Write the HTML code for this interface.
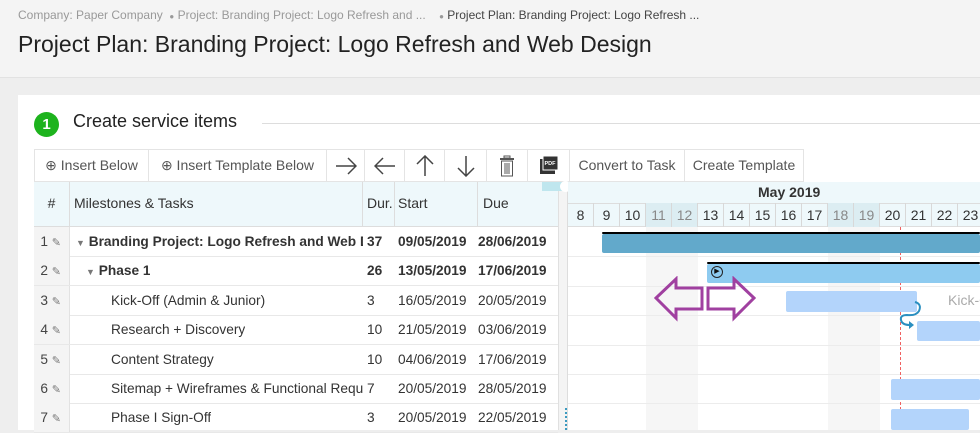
<!DOCTYPE html>
<html><head><style>
*{margin:0;padding:0;box-sizing:border-box}
body{width:980px;height:430px;overflow:hidden;background:#eeeeee;font-family:"Liberation Sans",sans-serif;position:relative;color:#333}
.a{position:absolute;white-space:nowrap}
.hdr{left:0;top:0;width:980px;height:78px;background:#f4f4f4;border-bottom:1px solid #e2e2e2}
.card{left:18px;top:95px;width:962px;height:335px;background:#fff}
.tb{top:149px;height:33px;border:1px solid #e4e4e4;border-left:none;font-size:14px;color:#555;line-height:31px;text-align:center}
.tb svg{margin-top:5px}
.row{left:34px;width:524px;height:30px;border-bottom:1px solid #e8e8e8;font-size:13.7px;line-height:29px}
.c{position:absolute;top:0;height:100%;white-space:nowrap;overflow:hidden}
.num{left:0;width:36px;background:#f4f4f4;border-right:1px solid #e2e2e2;text-align:right;padding-right:8px;color:#444}
.pen{font-size:11px;color:#777}
.d{position:absolute;top:203px;height:24px;width:26px;border-right:1px solid #d8d8d8;text-align:center;font-size:14px;line-height:24px;color:#333}
.wk{background:#dcedf2;color:#888}
.bar{position:absolute;border-radius:2px}
</style></head><body>
<div class="a hdr"></div>
<div class="a" style="left:18px;top:8px;font-size:12px;color:#999">Company: Paper Company &nbsp;<span style="font-size:8px">●</span> Project: Branding Project: Logo Refresh and ... &nbsp;&nbsp; <span style="font-size:8px">●</span> <span style="color:#444">Project Plan: Branding Project: Logo Refresh ...</span></div>
<div class="a" style="left:18px;top:31px;font-size:23px;color:#222">Project Plan: Branding Project: Logo Refresh and Web Design</div>
<div class="a card"></div>
<div class="a" style="left:34px;top:112px;width:25px;height:25px;border-radius:50%;background:#1db31d;color:#fff;font-weight:bold;font-size:15px;text-align:center;line-height:25px">1</div>
<div class="a" style="left:73px;top:111px;font-size:18px;color:#222">Create service items</div>
<div class="a" style="left:262px;top:123px;width:718px;height:1px;background:#ddd"></div>
<!-- toolbar -->
<div class="a tb" style="left:34px;width:115px;border-left:1px solid #e4e4e4">⊕ Insert Below</div>
<div class="a tb" style="left:149px;width:178px">⊕ Insert Template Below</div>
<div class="a tb" style="left:327px;width:38px"><svg width="22" height="22" viewBox="0 0 22 22"><path d="M1 11H21M13 3L21 11L13 19" fill="none" stroke="#444" stroke-width="1.5"/></svg></div>
<div class="a tb" style="left:365px;width:40px"><svg width="22" height="22" viewBox="0 0 22 22"><path d="M21 11H1M9 3L1 11L9 19" fill="none" stroke="#444" stroke-width="1.5"/></svg></div>
<div class="a tb" style="left:405px;width:40px"><svg width="22" height="22" viewBox="0 0 22 22"><path d="M11 21V1M3 9L11 1L19 9" fill="none" stroke="#444" stroke-width="1.5"/></svg></div>
<div class="a tb" style="left:445px;width:42px"><svg width="22" height="22" viewBox="0 0 22 22"><path d="M11 1V21M3 13L11 21L19 13" fill="none" stroke="#444" stroke-width="1.5"/></svg></div>
<div class="a tb" style="left:487px;width:41px"><svg width="16" height="22" viewBox="0 0 16 22"><rect x="5" y="1" width="6" height="2" fill="none" stroke="#555"/><rect x="1" y="3" width="14" height="2" fill="#555"/><rect x="2.5" y="6" width="11" height="15" fill="none" stroke="#555"/><path d="M6 8v11M8 8v11M10 8v11" stroke="#555"/></svg></div>
<div class="a tb" style="left:528px;width:42px"><svg width="20" height="20" viewBox="0 0 20 20"><rect x="1" y="4" width="15" height="15" fill="#333"/><rect x="4" y="1" width="15" height="14" fill="#333" stroke="#fff" stroke-width="1"/><text x="5.5" y="10" font-size="5.5" fill="#fff" font-family="Liberation Sans" font-weight="bold">PDF</text></svg></div>
<div class="a tb" style="left:570px;width:115px">Convert to Task</div>
<div class="a tb" style="left:685px;width:119px">Create Template</div>
<!-- grid header -->
<div class="a" style="left:34px;top:182px;width:524px;height:45px;background:#eef8fb;border-bottom:1px solid #ddd;font-size:14px;color:#333">
<div class="c" style="left:0;width:36px;border-right:1px solid #ddd;text-align:center;line-height:43px">#</div>
<div class="c" style="left:36px;width:293px;border-right:1px solid #ddd;padding-left:4px;line-height:43px">Milestones &amp; Tasks</div>
<div class="c" style="left:329px;width:32px;border-right:1px solid #ddd;padding-left:4px;line-height:43px">Dur.</div>
<div class="c" style="left:361px;width:83px;border-right:1px solid #ddd;padding-left:3px;line-height:43px">Start</div>
<div class="c" style="left:444px;width:80px;padding-left:5px;line-height:43px">Due</div>
</div>
<!-- splitter -->
<div class="a" style="left:558px;top:182px;width:10px;height:248px;background:#f4f4f4;border-left:1px solid #e0e0e0;border-right:1px solid #ddd"></div>
<div class="a" style="left:542px;top:182px;width:48px;height:9px;background:#bfe6ee"></div>
<div class="a" style="left:560px;top:181px;width:11px;height:11px;border-radius:50%;background:#fff"></div>
<div class="a" style="left:565px;top:408px;width:2px;height:22px;border-left:2px dotted #3a9ac0"></div>
<!-- rows -->
<div class="a row" style="top:227px"><div class="c num">1 <span class="pen">✎</span></div><div class="c" style="left:36px;width:293px;padding-left:6px;font-weight:bold"><span style="font-size:9px;color:#777">▼</span> Branding Project: Logo Refresh and Web Design</div><div class="c" style="left:333px;font-weight:bold">37</div><div class="c" style="left:364px;font-weight:bold">09/05/2019</div><div class="c" style="left:444px;font-weight:bold">28/06/2019</div></div>
<div class="a row" style="top:256px"><div class="c num">2 <span class="pen">✎</span></div><div class="c" style="left:36px;padding-left:16px;font-weight:bold"><span style="font-size:9px;color:#777">▼</span> Phase 1</div><div class="c" style="left:333px;font-weight:bold">26</div><div class="c" style="left:364px;font-weight:bold">13/05/2019</div><div class="c" style="left:444px;font-weight:bold">17/06/2019</div></div>
<div class="a row" style="top:286px"><div class="c num">3 <span class="pen">✎</span></div><div class="c" style="left:77px">Kick-Off (Admin &amp; Junior)</div><div class="c" style="left:333px">3</div><div class="c" style="left:364px">16/05/2019</div><div class="c" style="left:444px">20/05/2019</div></div>
<div class="a row" style="top:315px"><div class="c num">4 <span class="pen">✎</span></div><div class="c" style="left:77px">Research + Discovery</div><div class="c" style="left:333px">10</div><div class="c" style="left:364px">21/05/2019</div><div class="c" style="left:444px">03/06/2019</div></div>
<div class="a row" style="top:345px"><div class="c num">5 <span class="pen">✎</span></div><div class="c" style="left:77px">Content Strategy</div><div class="c" style="left:333px">10</div><div class="c" style="left:364px">04/06/2019</div><div class="c" style="left:444px">17/06/2019</div></div>
<div class="a row" style="top:374px"><div class="c num">6 <span class="pen">✎</span></div><div class="c" style="left:77px;width:252px">Sitemap + Wireframes &amp; Functional Requirements</div><div class="c" style="left:333px">7</div><div class="c" style="left:364px">20/05/2019</div><div class="c" style="left:444px">28/05/2019</div></div>
<div class="a row" style="top:403px"><div class="c num">7 <span class="pen">✎</span></div><div class="c" style="left:77px">Phase I Sign-Off</div><div class="c" style="left:333px">3</div><div class="c" style="left:364px">20/05/2019</div><div class="c" style="left:444px">22/05/2019</div></div>
<!-- gantt -->
<div class="a" style="left:568px;top:182px;width:412px;height:21px;background:#eef8fb;text-align:center;font-weight:bold;font-size:14px;line-height:21px"><span style="position:absolute;left:190px">May 2019</span></div>
<div class="a" style="left:568px;top:203px;width:412px;height:24px;background:#eef8fb;border-top:1px solid #ddd;border-bottom:1px solid #ddd"></div>
<div class="d" style="left:568px">8</div><div class="d" style="left:594px">9</div><div class="d" style="left:620px">10</div><div class="d wk" style="left:646px">11</div><div class="d wk" style="left:672px">12</div><div class="d" style="left:698px">13</div><div class="d" style="left:724px">14</div><div class="d" style="left:750px">15</div><div class="d" style="left:776px">16</div><div class="d" style="left:802px">17</div><div class="d wk" style="left:828px">18</div><div class="d wk" style="left:854px">19</div><div class="d" style="left:880px">20</div><div class="d" style="left:906px">21</div><div class="d" style="left:932px">22</div><div class="d" style="left:958px">23</div>
<div class="a" style="left:646px;top:227px;width:52px;height:203px;background:#f6f6f6"></div>
<div class="a" style="left:828px;top:227px;width:52px;height:203px;background:#f6f6f6"></div>
<div class="a" style="left:568px;top:256px;width:412px;height:1px;background:#ececec"></div>
<div class="a" style="left:568px;top:286px;width:412px;height:1px;background:#ececec"></div>
<div class="a" style="left:568px;top:315px;width:412px;height:1px;background:#ececec"></div>
<div class="a" style="left:568px;top:345px;width:412px;height:1px;background:#ececec"></div>
<div class="a" style="left:568px;top:374px;width:412px;height:1px;background:#ececec"></div>
<div class="a" style="left:568px;top:403px;width:412px;height:1px;background:#ececec"></div>
<div class="a" style="left:900px;top:227px;width:0;height:203px;border-left:1px dashed #f06060"></div>
<div class="bar" style="left:602px;top:232px;width:378px;height:2px;background:#000"></div>
<div class="bar" style="left:602px;top:234px;width:378px;height:19px;background:#62a9cb"></div>
<div class="bar" style="left:707px;top:262px;width:273px;height:2px;background:#000"></div>
<div class="bar" style="left:707px;top:264px;width:273px;height:19px;background:#8ecbf0"></div>
<div class="a" style="left:711px;top:266px;width:12px;height:12px;border:1px solid #222;border-radius:50%;font-size:7px;line-height:10px;text-align:center;color:#111">▶</div>
<div class="bar" style="left:786px;top:291px;width:131px;height:21px;background:#b3d4fb"></div>
<div class="a" style="left:948px;top:292px;font-size:14px;color:#aaa">Kick-Off</div>
<div class="bar" style="left:917px;top:321px;width:63px;height:20px;background:#b3d4fb"></div>
<div class="bar" style="left:891px;top:379px;width:89px;height:21px;background:#b3d4fb"></div>
<div class="bar" style="left:891px;top:409px;width:78px;height:21px;background:#b3d4fb"></div>
<svg class="a" style="left:895px;top:300px" width="30" height="34" viewBox="0 0 30 34"><path d="M20 2 Q27 4 24 11 Q21 16 12 15 Q5 15 6 20 Q7 25 15 25" fill="none" stroke="#2a8fc0" stroke-width="2"/><path d="M14 21 L19 25 L14 29Z" fill="#2a8fc0"/></svg>
<svg class="a" style="left:654px;top:276px" width="102" height="46" viewBox="0 0 102 46"><path d="M2 22 L22 3 V12 H48 V33 H22 V42 Z" fill="none" stroke="#a040a0" stroke-width="3"/><path d="M100 22 L80 3 V12 H54 V33 H80 V42 Z" fill="none" stroke="#a040a0" stroke-width="3"/></svg>
</body></html>
